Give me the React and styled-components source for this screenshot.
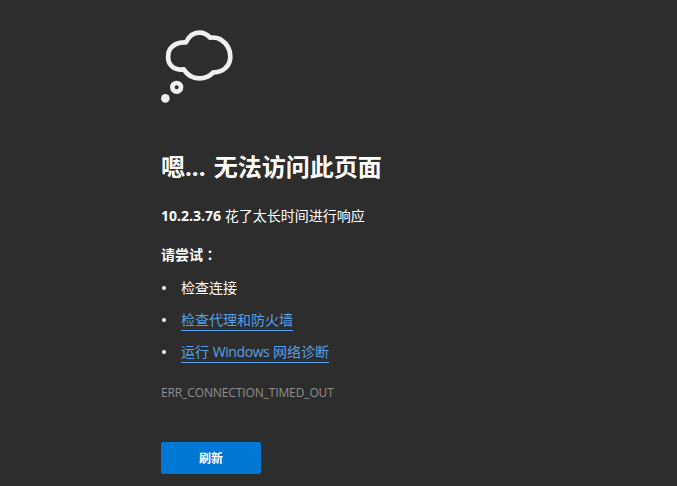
import React from 'react'
import styled, { createGlobalStyle } from 'styled-components'

const GlobalStyle = createGlobalStyle`
    html, body {
        margin: 0;
        padding: 0;
        height: 100%;
        background: #2d2d2d;
    }
    body {
        font-family: "Open Sans", "Noto Sans CJK SC", sans-serif;
        color: #fff;
        overflow: hidden;
    }
`

const Page = styled.div`
    display: flex;
    flex-direction: column;
    align-items: flex-start;
    height: 486px;
    box-sizing: border-box;
    padding: 30px 0 0 161px;
`

const Icon = styled.svg`
    display: block;
    width: 73px;
    height: 79px;
`

const Title = styled.h1`
    margin: 41px 0 0;
    font-size: 24px;
    line-height: 34px;
    font-weight: 700;
    word-spacing: 2px;
`

const Summary = styled.p`
    margin: 22px 0 0;
    font-size: 14px;
    line-height: 20px;
    font-weight: 400;

    strong {
        font-weight: 700;
    }
`

const TryLabel = styled.h2`
    margin: 19px 0 0;
    font-size: 14px;
    line-height: 20px;
    font-weight: 700;
`

const Colon = styled.span`
    font-family: "Noto Sans CJK TC", sans-serif;
    line-height: 1;
`

const Tips = styled.ul`
    display: flex;
    flex-direction: column;
    gap: 12px;
    list-style: none;
    margin: 13px 0 0;
    padding: 0;
`

const Tip = styled.li`
    display: flex;
    align-items: center;
    height: 20px;
    font-size: 14px;
    line-height: 20px;

    &::before {
        content: '';
        width: 4px;
        height: 4px;
        margin: 0 15px 0 1px;
        border-radius: 50%;
        background: #fff;
    }
`

const TipLink = styled.a`
    color: #55a0e8;
    text-decoration: none;
    border-bottom: 1px solid #55a0e8;
`

const Latin = styled.span`
    letter-spacing: -0.4px;
`

const ErrorCode = styled.div`
    margin: 21px 0 0;
    font-size: 12px;
    line-height: 20px;
    letter-spacing: -0.12px;
    color: #8f8f8f;
`

const RefreshButton = styled.button`
    width: 100px;
    height: 32px;
    margin: 39px 0 0;
    padding: 0 0 1px;
    border: 0;
    border-radius: 2px;
    background: #0078d4;
    color: #fff;
    font-family: inherit;
    font-size: 12px;
    font-weight: 700;
`

const CloudIcon = () => (
    <Icon viewBox="33 30 219 237" fill="none" stroke="#f0f0f0">
        <path
            strokeWidth="14"
            strokeLinejoin="round"
            d="M108 67 C118 46 132 38 148 38 C162 38 172 44 180 53 C190 52 204 53 214 60 C232 72 241 90 241 110 C241 136 220 158 190 157 C178 170 164 175 148 175 C128 175 112 166 101 148 C88 150 72 147 62 135 C52 124 52 100 60 87 C70 72 88 66 108 67 Z"
        />
        <circle cx="80" cy="202" r="13" strokeWidth="14" />
        <circle cx="46" cy="235" r="13" fill="#f0f0f0" stroke="none" />
    </Icon>
)

const App = () => {
    return (
        <Page>
            <GlobalStyle />
            <CloudIcon />
            <Title>嗯... 无法访问此页面</Title>
            <Summary><strong>10.2.3.76</strong> 花了太长时间进行响应</Summary>
            <TryLabel>请尝试<Colon>：</Colon></TryLabel>
            <Tips>
                <Tip>检查连接</Tip>
                <Tip><TipLink href="#">检查代理和防火墙</TipLink></Tip>
                <Tip><TipLink href="#">运行 <Latin>Windows</Latin> 网络诊断</TipLink></Tip>
            </Tips>
            <ErrorCode>ERR_CONNECTION_TIMED_OUT</ErrorCode>
            <RefreshButton>刷新</RefreshButton>
        </Page>
    )
}

export default App
